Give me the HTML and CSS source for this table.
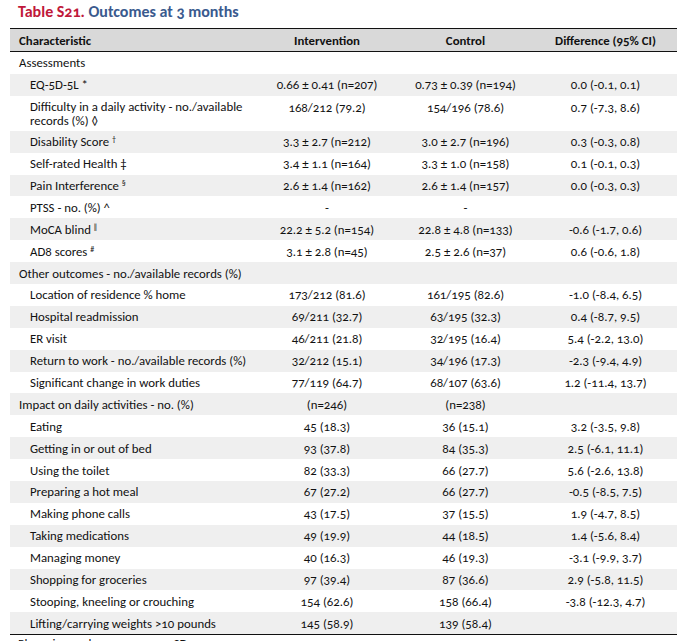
FILE: index.html
```html
<!DOCTYPE html>
<html>
<head>
<meta charset="utf-8">
<link rel="stylesheet" href="styles.css">
</head>
<body>
<div class="title"><span class="tnum">Table S21.</span> <span class="tname">Outcomes at 3 months</span></div>
<table class="outcomes">
  <colgroup>
    <col class="c1"><col class="c2"><col class="c3"><col class="c4">
  </colgroup>
  <thead>
    <tr><th class="lab">Characteristic</th><th>Intervention</th><th>Control</th><th>Difference (95% CI)</th></tr>
  </thead>
  <tbody>
    <tr><td class="lab">Assessments</td><td></td><td></td><td></td></tr>
    <tr><td class="lab sub">EQ-5D-5L *</td><td>0.66 ± 0.41 (n=207)</td><td>0.73 ± 0.39 (n=194)</td><td>0.0 (-0.1, 0.1)</td></tr>
    <tr class="two"><td class="lab sub wrap">Difficulty in a daily activity - no./available records (%) ◊</td><td>168/212 (79.2)</td><td>154/196 (78.6)</td><td>0.7 (-7.3, 8.6)</td></tr>
    <tr><td class="lab sub">Disability Score <sup>†</sup></td><td>3.3 ± 2.7 (n=212)</td><td>3.0 ± 2.7 (n=196)</td><td>0.3 (-0.3, 0.8)</td></tr>
    <tr><td class="lab sub">Self-rated Health ‡</td><td>3.4 ± 1.1 (n=164)</td><td>3.3 ± 1.0 (n=158)</td><td>0.1 (-0.1, 0.3)</td></tr>
    <tr><td class="lab sub">Pain Interference <sup>§</sup></td><td>2.6 ± 1.4 (n=162)</td><td>2.6 ± 1.4 (n=157)</td><td>0.0 (-0.3, 0.3)</td></tr>
    <tr><td class="lab sub">PTSS - no. (%) ^</td><td>-</td><td>-</td><td></td></tr>
    <tr><td class="lab sub">MoCA blind <sup>‖</sup></td><td>22.2 ± 5.2 (n=154)</td><td>22.8 ± 4.8 (n=133)</td><td>-0.6 (-1.7, 0.6)</td></tr>
    <tr><td class="lab sub">AD8 scores <sup>#</sup></td><td>3.1 ± 2.8 (n=45)</td><td>2.5 ± 2.6 (n=37)</td><td>0.6 (-0.6, 1.8)</td></tr>
    <tr><td class="lab">Other outcomes - no./available records (%)</td><td></td><td></td><td></td></tr>
    <tr><td class="lab sub">Location of residence % home</td><td>173/212 (81.6)</td><td>161/195 (82.6)</td><td>-1.0 (-8.4, 6.5)</td></tr>
    <tr><td class="lab sub">Hospital readmission</td><td>69/211 (32.7)</td><td>63/195 (32.3)</td><td>0.4 (-8.7, 9.5)</td></tr>
    <tr><td class="lab sub">ER visit</td><td>46/211 (21.8)</td><td>32/195 (16.4)</td><td>5.4 (-2.2, 13.0)</td></tr>
    <tr><td class="lab sub">Return to work - no./available records (%)</td><td>32/212 (15.1)</td><td>34/196 (17.3)</td><td>-2.3 (-9.4, 4.9)</td></tr>
    <tr><td class="lab sub">Significant change in work duties</td><td>77/119 (64.7)</td><td>68/107 (63.6)</td><td>1.2 (-11.4, 13.7)</td></tr>
    <tr><td class="lab">Impact on daily activities - no. (%)</td><td>(n=246)</td><td>(n=238)</td><td></td></tr>
    <tr><td class="lab sub">Eating</td><td>45 (18.3)</td><td>36 (15.1)</td><td>3.2 (-3.5, 9.8)</td></tr>
    <tr><td class="lab sub">Getting in or out of bed</td><td>93 (37.8)</td><td>84 (35.3)</td><td>2.5 (-6.1, 11.1)</td></tr>
    <tr><td class="lab sub">Using the toilet</td><td>82 (33.3)</td><td>66 (27.7)</td><td>5.6 (-2.6, 13.8)</td></tr>
    <tr><td class="lab sub">Preparing a hot meal</td><td>67 (27.2)</td><td>66 (27.7)</td><td>-0.5 (-8.5, 7.5)</td></tr>
    <tr><td class="lab sub">Making phone calls</td><td>43 (17.5)</td><td>37 (15.5)</td><td>1.9 (-4.7, 8.5)</td></tr>
    <tr><td class="lab sub">Taking medications</td><td>49 (19.9)</td><td>44 (18.5)</td><td>1.4 (-5.6, 8.4)</td></tr>
    <tr><td class="lab sub">Managing money</td><td>40 (16.3)</td><td>46 (19.3)</td><td>-3.1 (-9.9, 3.7)</td></tr>
    <tr><td class="lab sub">Shopping for groceries</td><td>97 (39.4)</td><td>87 (36.6)</td><td>2.9 (-5.8, 11.5)</td></tr>
    <tr><td class="lab sub">Stooping, kneeling or crouching</td><td>154 (62.6)</td><td>158 (66.4)</td><td>-3.8 (-12.3, 4.7)</td></tr>
    <tr><td class="lab sub">Lifting/carrying weights &gt;10 pounds</td><td>145 (58.9)</td><td>139 (58.4)</td><td></td></tr>
  </tbody>
</table>
<p class="foot">Plus minus values are mean ± SD.</p>
</body>
</html>
```
FILE: styles.css
```css
html, body {
  margin: 0;
  padding: 0;
  background: #ffffff;
}
body {
  font-family: Candara, Carlito, Lato, "Noto Sans", sans-serif;
  font-size: 12.8px;
  color: #111111;
  font-variant-numeric: oldstyle-nums;
}
.title {
  margin: 0 0 0 18px;
  height: 28px;
  line-height: 24px;
  font-size: 16px;
  font-weight: bold;
}
.tnum { color: #c0183a; }
.tname { color: #3a5a8e; }
.outcomes {
  margin-left: 10px;
  width: 667px;
  border-collapse: collapse;
  table-layout: fixed;
  border-top: 1.5px solid #111;
  border-bottom: 1.5px solid #111;
}
.c1 { width: 247px; }
.c2 { width: 140px; }
.c3 { width: 137px; }
.c4 { width: 143px; }
.outcomes th {
  background: #d9d9d9;
  height: 22px;
  padding: 0;
  font-weight: bold;
  text-align: center;
  border-bottom: 1.5px solid #111;
}
.outcomes td {
  height: 21.9px;
  padding: 0;
  text-align: center;
  vertical-align: middle;
  white-space: nowrap;
}
.outcomes th.lab, .outcomes td.lab {
  text-align: left;
  padding-left: 9px;
}
.outcomes td.sub { padding-left: 20px; }
.outcomes td.wrap { white-space: normal; line-height: 14px; }
.outcomes tbody tr:nth-child(even) td { background: #efefef; }
.outcomes tr.two td {
  height: 35px;
  vertical-align: top;
  padding-top: 4px;
  box-sizing: border-box;
}
.outcomes sup {
  font-size: 8px;
  vertical-align: 4px;
  line-height: 0;
}
.foot {
  margin: 2px 0 0 18px;
  line-height: 14px;
}
```
